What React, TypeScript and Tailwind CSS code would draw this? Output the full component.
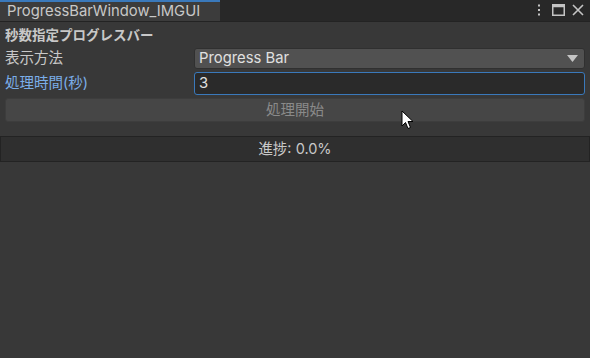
import React from "react";

export default function App() {
  const font = { fontFamily: 'Inter, "Noto Sans CJK JP", sans-serif' };
  return (
    <div className="relative w-[590px] h-[358px] bg-[#383838] overflow-hidden" style={font}>
      {/* Tab bar */}
      <div className="flex h-[22px] bg-[#282828] border-b border-[#232323]">
        <div className="w-[220px] h-[21px] bg-[#3c3c3c] border-t-2 border-[#3a79bb] flex items-center pl-[7px] text-[14.8px] text-[#c8c8c8] leading-none">
          ProgressBarWindow_IMGUI
        </div>
        <div className="flex-1" />
        <div className="flex items-center gap-[7px] pr-[6px] pb-[2px]">
          <svg width="4" height="12" viewBox="0 0 4 12">
            <rect x="1" y="0.5" width="2" height="2" fill="#c4c4c4" />
            <rect x="1" y="5" width="2" height="2" fill="#c4c4c4" />
            <rect x="1" y="9.5" width="2" height="2" fill="#c4c4c4" />
          </svg>
          <svg width="13" height="12" viewBox="0 0 13 12" className="ml-[4px]">
            <rect x="0.75" y="0.75" width="11.5" height="10.5" fill="none" stroke="#c4c4c4" strokeWidth="1.5" />
            <rect x="0.75" y="0.75" width="11.5" height="2.5" fill="#c4c4c4" />
          </svg>
          <svg width="12" height="12" viewBox="0 0 12 12">
            <path d="M1 1 L11 11 M11 1 L1 11" stroke="#c4c4c4" strokeWidth="1.6" />
          </svg>
        </div>
      </div>

      {/* Content */}
      <div className="flex flex-col px-[5px] pt-[6px]">
        <div className="h-[16px] flex items-center text-[13.5px] font-bold text-[#c8c8c8] leading-none">
          秒数指定プログレスバー
        </div>
        <div className="flex items-center h-[21px] mt-[4px]">
          <div className="w-[189px] text-[14.5px] text-[#c8c8c8] leading-none">表示方法</div>
          <div className="flex-1 h-[21px] bg-[#515151] border border-[#303030] rounded-[3px] flex items-center pl-[4px] pr-[6px] text-[14.8px] text-[#e0e0e0] leading-none">
            <span className="flex-1">Progress Bar</span>
            <svg width="11" height="7" viewBox="0 0 11 7">
              <path d="M0 0 H11 L5.5 7 Z" fill="#c4c4c4" />
            </svg>
          </div>
        </div>
        <div className="flex items-center h-[23px] mt-[3px]">
          <div className="w-[189px] text-[14.5px] text-[#7baee8] leading-none">処理時間(秒)</div>
          <div className="flex-1 h-[23px] bg-[#2a2a2a] border border-[#3a79bb] rounded-[3px] flex items-center pl-[4px] text-[14.8px] text-[#e0e0e0] leading-none">
            3
          </div>
        </div>
        <div className="mt-[3px] h-[24px] bg-[#464646] border border-[#3d3d3d] rounded-[3px] flex items-center justify-center text-[14.5px] text-[#8a8a8a] leading-none">
          処理開始
        </div>
      </div>

      {/* Progress bar */}
      <div className="mt-[14px] h-[26px] bg-[#2f2f2f] border border-[#232323] flex items-center justify-center text-[14.5px] text-[#c8c8c8] leading-none">
        進捗: 0.0%
      </div>

      {/* Mouse cursor */}
      <svg className="absolute left-[401px] top-[110px]" width="13" height="20" viewBox="0 0 13 20">
        <path d="M1 1 L1 16 L4.5 12.5 L7 18.5 L9.5 17.5 L7 11.5 L12 11.5 Z" fill="#ffffff" stroke="#000000" strokeWidth="1" strokeLinejoin="round" />
      </svg>
    </div>
  );
}
